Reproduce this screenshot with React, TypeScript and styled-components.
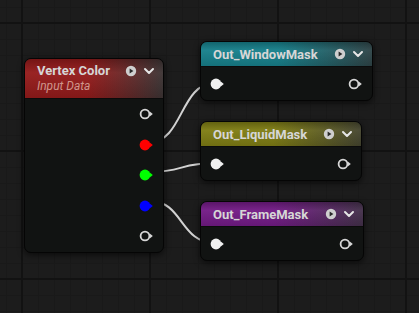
import styled, { createGlobalStyle } from 'styled-components'

const GlobalStyle = createGlobalStyle`
  html, body {
    margin: 0;
    padding: 0;
    background: #1c1c1c;
    font-family: Roboto, 'Liberation Sans', sans-serif;
  }
`

type PinKind = 'hollow' | 'red' | 'green' | 'blue' | 'white'

const pinColors: Record<PinKind, string> = {
  hollow: '#d6d6d6',
  red: '#ff0000',
  green: '#00ff00',
  blue: '#0000ff',
  white: '#f0f0f0',
}

const Pin = ({ kind }: { kind: PinKind }) => {
  const color = pinColors[kind]
  const hollow = kind === 'hollow'
  return (
    <svg width="16" height="12" viewBox="0 0 16 12">
      {hollow ? (
        <circle cx="6" cy="6" r="4.4" fill="none" stroke={color} strokeWidth="1.8" />
      ) : (
        <circle cx="6" cy="6" r="5.4" fill={color} />
      )}
      <path d="M10.8 3.6 L13.8 6 L10.8 8.4 Z" fill={color} />
    </svg>
  )
}

const PlayIcon = () => (
  <svg width="12" height="12" viewBox="0 0 12 12">
    <circle cx="6" cy="6" r="5.2" fill="#cfcfcf" />
    <path d="M4.6 3.4 L8.4 6 L4.6 8.6 Z" fill="#2a2a2a" />
  </svg>
)

const ChevronIcon = () => (
  <svg width="12" height="12" viewBox="0 0 12 12">
    <path d="M2 4 L6 8 L10 4" fill="none" stroke="#e6e6e6" strokeWidth="2" strokeLinecap="round" strokeLinejoin="round" />
  </svg>
)

type NodeProps = {
  title: string
  subtitle?: string
  color: string
  fade: string
  x: number
  y: number
  width: number
  children: React.ReactNode
}

const GraphNode = ({ title, subtitle, color, fade, x, y, width, children }: NodeProps) => (
  <NodeBox style={{ left: x, top: y, width }}>
    <NodeHeader $color={color} $fade={fade} $tall={!!subtitle}>
      <TitleBlock>
        <Title>{title}</Title>
        {subtitle && <Subtitle>{subtitle}</Subtitle>}
      </TitleBlock>
      <HeaderIcons>
        <PlayIcon />
        <ChevronIcon />
      </HeaderIcons>
    </NodeHeader>
    <NodeBody>{children}</NodeBody>
  </NodeBox>
)

export default function App() {
  return (
    <>
      <GlobalStyle />
      <Canvas>
        <Wires width="419" height="313" viewBox="0 0 419 313">
          <path d="M150 142 C183 142 180 83 215 83" />
          <path d="M150 172 C183 172 180 163 215 163" />
          <path d="M150 201 C183 201 180 243 215 243" />
        </Wires>

        <GraphNode
          title="Vertex Color"
          subtitle="Input Data"
          color="#951b1b"
          fade="#3c3434"
          x={24}
          y={58}
          width={138}
        >
          <PinRow $height={30.5} $align="end"><Pin kind="hollow" /></PinRow>
          <PinRow $height={30.5} $align="end"><Pin kind="red" /></PinRow>
          <PinRow $height={30.5} $align="end"><Pin kind="green" /></PinRow>
          <PinRow $height={30.5} $align="end"><Pin kind="blue" /></PinRow>
          <PinRow $height={30.5} $align="end"><Pin kind="hollow" /></PinRow>
        </GraphNode>

        <GraphNode title="Out_WindowMask" color="#17808b" fade="#2e4447" x={200} y={41} width={171}>
          <PinRow $height={33} $align="between">
            <Pin kind="white" />
            <Pin kind="hollow" />
          </PinRow>
        </GraphNode>

        <GraphNode title="Out_LiquidMask" color="#7f7d14" fade="#45452f" x={200} y={121} width={160}>
          <PinRow $height={33} $align="between">
            <Pin kind="white" />
            <Pin kind="hollow" />
          </PinRow>
        </GraphNode>

        <GraphNode title="Out_FrameMask" color="#731b86" fade="#43304a" x={200} y={201} width={162}>
          <PinRow $height={33} $align="between">
            <Pin kind="white" />
            <Pin kind="hollow" />
          </PinRow>
        </GraphNode>
      </Canvas>
    </>
  )
}

const Canvas = styled.div`
  position: relative;
  width: 419px;
  height: 313px;
  overflow: hidden;

  background-color: #1c1c1c;
  background-image:
    linear-gradient(90deg, #121212 0 2px, transparent 2px),
    linear-gradient(180deg, #121212 0 2px, transparent 2px),
    linear-gradient(90deg, #191919 0 1px, transparent 1px),
    linear-gradient(180deg, #191919 0 1px, transparent 1px);
  background-size: 128px 128px, 128px 128px, 16px 16px, 16px 16px;
  background-position: 21px 0, 0 22px, 6px 0, 0 7px;
`

const Wires = styled.svg`
  position: absolute;
  inset: 0;
  z-index: 0;

  path {
    fill: none;
    stroke: #d2d2d2;
    stroke-width: 2;
  }
`

const NodeBox = styled.div`
  position: absolute;
  z-index: 1;
  display: flex;
  flex-direction: column;

  background: #111312;
  border: 1px solid #050505;
  border-radius: 7px;
  overflow: hidden;
  box-shadow: 0 2px 6px rgba(0, 0, 0, 0.6);
`

const NodeHeader = styled.div<{ $color: string; $fade: string; $tall: boolean }>`
  height: ${(p) => (p.$tall ? 36 : 24)}px;
  display: flex;
  align-items: ${(p) => (p.$tall ? 'flex-start' : 'center')};
  justify-content: space-between;
  padding: ${(p) => (p.$tall ? '3px 8px 0 12px' : '0 8px 0 12px')};

  background:
    linear-gradient(180deg, rgba(0, 0, 0, 0.22) 0%, rgba(255, 255, 255, 0.04) 35%, rgba(0, 0, 0, 0.12) 100%),
    linear-gradient(90deg, ${(p) => p.$color} 0%, ${(p) => p.$color} 45%, ${(p) => p.$fade} 100%);
  border-bottom: 1px solid #0b0b0b;
`

const TitleBlock = styled.div`
  display: flex;
  flex-direction: column;
`

const Title = styled.span`
  color: #d6d6d6;
  font-size: 13px;
  font-weight: bold;
  line-height: 17px;
`

const Subtitle = styled.span`
  color: #d0968c;
  font-size: 12px;
  font-style: italic;
  line-height: 15px;
`

const HeaderIcons = styled.div`
  display: flex;
  align-items: center;
  gap: 6px;
  height: 17px;
`

const NodeBody = styled.div`
  display: flex;
  flex-direction: column;
`

const PinRow = styled.div<{ $height: number; $align: 'end' | 'between' }>`
  height: ${(p) => p.$height}px;
  display: flex;
  align-items: center;
  justify-content: ${(p) => (p.$align === 'end' ? 'flex-end' : 'space-between')};
  padding: 0 8px 0 9px;
`
